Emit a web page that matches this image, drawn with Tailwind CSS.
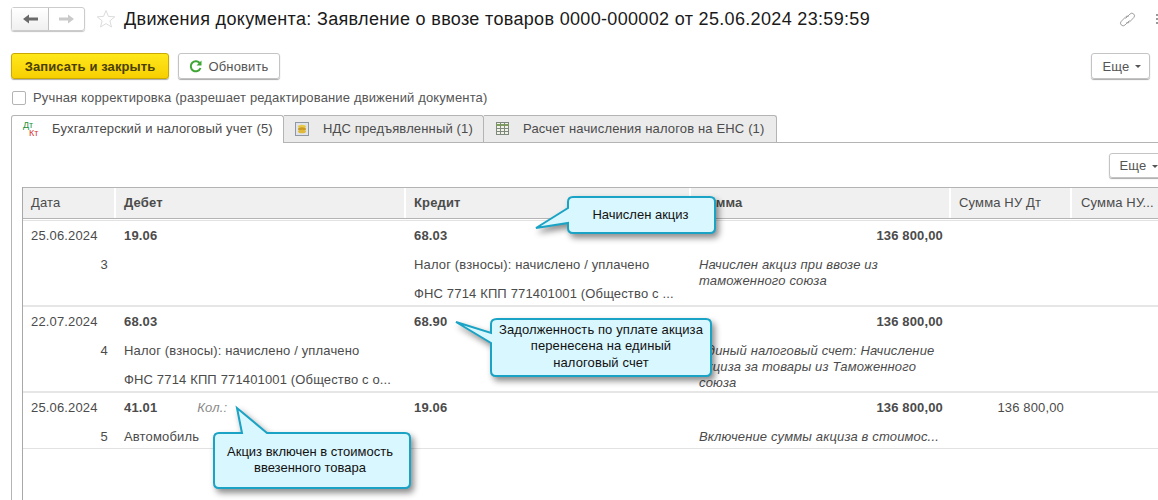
<!DOCTYPE html>
<html lang="ru">
<head>
    <meta charset="UTF-8">
    <title>Движения документа</title>
    <script src="https://cdn.jsdelivr.net/npm/@tailwindcss/browser@4"></script>
</head>
<body class="bg-white text-[#4b4b4b] font-['Liberation_Sans',Arial,sans-serif] text-[13px] tracking-[0.15px]">
<div class="relative w-[1158px] h-[500px] overflow-hidden">

    <!-- Title bar -->
    <header class="flex items-center h-[38px] pl-[11px]">
        <div class="flex h-[24px] w-[74px] rounded-[3px] border border-[#cccccc] shadow-[0_1px_1px_#c4c4c4]">
            <div class="w-[37px] flex items-center justify-center border-r border-[#c0c0c0] bg-gradient-to-b from-white to-[#f0f0f0]">
                <svg width="15" height="10" viewBox="0 0 15 10"><path d="M0 5 L6 0.5 V3.5 H15 V6.5 H6 V9.5 Z" fill="#6a6a6a"/></svg>
            </div>
            <div class="flex-1 flex items-center justify-center">
                <svg width="15" height="10" viewBox="0 0 15 10"><path d="M15 5 L9 0.5 V3.5 H0 V6.5 H9 V9.5 Z" fill="#cacaca"/></svg>
            </div>
        </div>
        <svg class="ml-[11px]" width="20" height="20" viewBox="0 0 20 20"><path d="M10 1.5 L12.4 7.4 L18.8 7.8 L13.9 11.8 L15.5 18 L10 14.6 L4.5 18 L6.1 11.8 L1.2 7.8 L7.6 7.4 Z" fill="none" stroke="#dcdcdc"/></svg>
        <h1 class="ml-[8px] text-[18px] tracking-[0.33px] text-[#1a1a1a] whitespace-nowrap">Движения документа: Заявление о ввозе товаров 0000-000002 от 25.06.2024 23:59:59</h1>
        <svg class="ml-auto mr-[20px]" width="17" height="17" viewBox="0 0 17 17" fill="none" stroke="#a0a0a0"><path d="M6.5 7.5 L11 3 a2.6 2.6 0 0 1 3.7 3.7 L10 11.5 a2.2 2.2 0 0 1 -2.5 0"/><path d="M10.5 9.5 L6 14 a2.6 2.6 0 0 1 -3.7 -3.7 L7 5.5 a2.2 2.2 0 0 1 2.5 0"/></svg>
        <div class="flex flex-col gap-[2px] w-[2px]">
            <span class="w-[2px] h-[2px] bg-[#999]"></span>
            <span class="w-[2px] h-[2px] bg-[#999]"></span>
            <span class="w-[2px] h-[2px] bg-[#999]"></span>
        </div>
    </header>

    <!-- Command bar -->
    <div class="flex items-center mt-[15px] h-[26px] pl-[11px] pr-[8px]">
        <button class="w-[158px] h-[26px] pt-[1px] rounded-[3px] border border-[#c9a800] bg-gradient-to-b from-[#ffe81a] to-[#f7cf00] font-bold tracking-[0.1px] text-[#4a4000] shadow-[0_1px_1px_#aaa]">Записать и закрыть</button>
        <button class="ml-[9px] w-[102px] h-[26px] pt-[1px] flex items-center justify-center gap-[6px] rounded-[3px] border border-[#c4c4c4] text-[#555] shadow-[0_1px_1px_#aaa]">
            <svg width="13" height="13" viewBox="0 0 13 13" fill="none"><path d="M11 3.6 A5 5 0 1 0 11.5 8" stroke="#3fa535" stroke-width="2"/><path d="M12.5 0.5 V5.5 H7.5 Z" fill="#3fa535"/></svg>
            Обновить
        </button>
        <button class="ml-auto w-[59px] h-[26px] pt-[1px] pl-[3px] flex items-center justify-center gap-[6px] rounded-[3px] border border-[#c4c4c4] text-[#555] shadow-[0_1px_1px_#aaa]">
            Еще <span class="w-0 h-0 border-x-[3px] border-x-transparent border-t-[3px] border-t-[#555]"></span>
        </button>
    </div>

    <!-- Manual adjustment -->
    <label class="flex items-center h-[16px] mt-[11px] pl-[12px]">
        <span class="w-[14px] h-[14px] rounded-[2px] border border-[#b4b4b4]"></span>
        <span class="ml-[7px] text-[#555] whitespace-nowrap">Ручная корректировка (разрешает редактирование движений документа)</span>
    </label>

    <!-- Tabs -->
    <div class="flex h-[28px] mt-[9px] ml-[11px] border-b border-[#b4b4b4]">
        <div class="flex items-center w-[273px] h-[28px] pb-[2px] pl-[10px] bg-white border border-b-0 border-[#b4b4b4] rounded-t-[3px] z-10">
            <span class="relative w-[30px] h-[20px] text-[9px] leading-[8px] tracking-normal">
                <span class="absolute left-[1px] top-[2px] text-[#1a8f3a]">Дт</span>
                <span class="absolute left-[7px] top-[10px] text-[#d4372c]">Кт</span>
            </span>
            <span class="whitespace-nowrap">Бухгалтерский и налоговый учет (5)</span>
        </div>
        <div class="flex items-center w-[200px] h-[27px] pb-[1px] pl-[11px] bg-[#ebebeb] border-r border-t border-[#b4b4b4] rounded-tr-[3px]">
            <svg width="14" height="14" viewBox="0 0 14 14"><rect x="0.5" y="0.5" width="13" height="13" fill="#dfe3ea" stroke="#8f97a3"/><ellipse cx="7" cy="4.5" rx="4" ry="1.8" fill="#e8c84a"/><ellipse cx="7" cy="7" rx="4" ry="1.8" fill="#c99a22"/><ellipse cx="7" cy="9.5" rx="4" ry="1.8" fill="#e0b83a"/></svg>
            <span class="ml-[14px] whitespace-nowrap">НДС предъявленный (1)</span>
        </div>
        <div class="flex items-center w-[293px] h-[27px] pb-[1px] pl-[12px] bg-[#ebebeb] border-r border-t border-[#b4b4b4] rounded-tr-[3px]">
            <svg width="13" height="13" viewBox="0 0 13 13" fill="none" stroke="#7f8a7f"><rect x="0.5" y="0.5" width="12" height="12" fill="#f2f2e8"/><path d="M0.5 3 H12.5" stroke="#7fa05a" stroke-width="2"/><path d="M0.5 6.5 H12.5 M0.5 9.5 H12.5 M4.5 0.5 V12.5 M8.5 0.5 V12.5"/></svg>
            <span class="ml-[14px] whitespace-nowrap">Расчет начисления налогов на ЕНС (1)</span>
        </div>
        <div class="flex-1"></div>
    </div>

    <!-- Tab body -->
    <div class="ml-[11px] border-l border-[#b4b4b4] h-[358px] pl-[10px]">
        <div class="flex justify-end h-[44px] pt-[10px] -mr-[11px]">
            <button class="w-[60px] h-[25px] pt-[1px] flex items-center justify-center gap-[6px] rounded-[3px] border border-[#c4c4c4] text-[#555] shadow-[0_1px_1px_#aaa]">
                Еще <span class="w-0 h-0 border-x-[3px] border-x-transparent border-t-[3px] border-t-[#555]"></span>
            </button>
        </div>

        <!-- Movements table -->
        <div class="w-[1200px] h-[314px] border-l border-[#a8a8a8]">
            <div class="grid grid-cols-[93px_290px_285px_260px_121px_150px] h-[32px] bg-[#f0f0f0] border-y border-[#b4b4b4] items-center">
                <div class="pl-[8px] pb-[1px] h-full flex items-center border-r-2 border-white">Дата</div>
                <div class="pl-[8px] pb-[1px] h-full flex items-center border-r-2 border-white font-bold">Дебет</div>
                <div class="pl-[8px] pb-[1px] h-full flex items-center border-r-2 border-white font-bold">Кредит</div>
                <div class="pl-[8px] pb-[1px] h-full flex items-center border-r-2 border-white font-bold">Сумма</div>
                <div class="pl-[8px] pb-[1px] h-full flex items-center border-r-2 border-white">Сумма НУ Дт</div>
                <div class="pl-[9px] pb-[1px] h-full flex items-center">Сумма НУ...</div>
            </div>
            <div class="h-[2px] border-b border-[#e2e2e2]"></div>

            <div class="grid grid-cols-[93px_290px_285px_260px_121px_150px] h-[86px] border-b-2 border-[#e6e6e6] leading-[29px]">
                <div class="pl-[8px]">25.06.2024<div class="pr-[8px] text-right">3</div></div>
                <div class="pl-[8px] font-bold">19.06</div>
                <div class="pl-[8px]">
                    <div class="font-bold">68.03</div>
                    <div>Налог (взносы): начислено / уплачено</div>
                    <div class="whitespace-nowrap">ФНС 7714 КПП 771401001 (Общество с ...</div>
                </div>
                <div class="pl-[8px] pr-[8px]">
                    <div class="font-bold text-right">136 800,00</div>
                    <div class="pt-[7px] italic leading-[16px]">Начислен акциз при ввозе из<br>таможенного союза</div>
                </div>
                <div></div>
                <div></div>
            </div>

            <div class="grid grid-cols-[93px_290px_285px_260px_121px_150px] h-[86px] border-b-2 border-[#e6e6e6] leading-[29px]">
                <div class="pl-[8px]">22.07.2024<div class="pr-[8px] text-right">4</div></div>
                <div class="pl-[8px]">
                    <div class="font-bold">68.03</div>
                    <div>Налог (взносы): начислено / уплачено</div>
                    <div class="whitespace-nowrap">ФНС 7714 КПП 771401001 (Общество с о...</div>
                </div>
                <div class="pl-[8px] font-bold">68.90</div>
                <div class="pl-[8px] pr-[8px]">
                    <div class="font-bold text-right">136 800,00</div>
                    <div class="pt-[7px] italic leading-[16px]">Единый налоговый счет: Начисление<br>акциза за товары из Таможенного<br>союза</div>
                </div>
                <div></div>
                <div></div>
            </div>

            <div class="grid grid-cols-[93px_290px_285px_260px_121px_150px] h-[56px] border-b border-[#e2e2e2] leading-[29px]">
                <div class="pl-[8px]">25.06.2024<div class="pr-[8px] text-right">5</div></div>
                <div class="pl-[8px]">
                    <div class="flex"><span class="font-bold">41.01</span><span class="ml-[40px] italic text-[#8a8a8a]">Кол.:</span></div>
                    <div>Автомобиль</div>
                </div>
                <div class="pl-[8px] font-bold">19.06</div>
                <div class="pl-[8px] pr-[8px]">
                    <div class="font-bold text-right">136 800,00</div>
                    <div class="italic whitespace-nowrap">Включение суммы акциза в стоимос...</div>
                </div>
                <div class="pr-[8px] text-right">136 800,00</div>
                <div></div>
            </div>
        </div>
    </div>

    <!-- Callouts drawn over the table -->
    <div class="absolute left-[530px] top-[192px] w-[190px] h-[50px]">
        <svg class="absolute inset-0 drop-shadow-[3px_4px_3px_rgba(0,0,0,0.45)]" width="190" height="50" viewBox="0 0 190 50"><path d="M43 5 H180 Q185 5 185 10 V36 Q185 41 180 41 H43 Q38 41 38 36 V31 L6 36 L38 16 V10 Q38 5 43 5 Z" fill="#d9f7fe" stroke="#1aa3c4" stroke-width="2"/></svg>
        <div class="absolute left-[38px] top-[5px] w-[147px] h-[36px] pr-[2px] pb-[1px] flex items-center justify-center text-[#111] tracking-normal">Начислен акциз</div>
    </div>
    <div class="absolute left-[450px] top-[313px] w-[270px] h-[70px]">
        <svg class="absolute inset-0 drop-shadow-[3px_4px_3px_rgba(0,0,0,0.45)]" width="270" height="70" viewBox="0 0 270 70"><path d="M47 6 H256 Q261 6 261 11 V58 Q261 63 256 63 H46 Q41 63 41 58 V30 L6 9 L41 20 V11 Q41 6 47 6 Z" fill="#d9f7fe" stroke="#1aa3c4" stroke-width="2"/></svg>
        <div class="absolute left-[41px] top-[6px] w-[220px] h-[57px] pb-[2px] flex items-center justify-center text-center leading-[16.5px] text-[#111] tracking-[0.1px]">Задолженность по уплате акциза<br>перенесена на единый<br>налоговый счет</div>
    </div>
    <div class="absolute left-[208px] top-[402px] w-[210px] h-[92px]">
        <svg class="absolute inset-0 drop-shadow-[3px_4px_3px_rgba(0,0,0,0.45)]" width="210" height="92" viewBox="0 0 210 92"><path d="M11 31 H34 L29 6 L59 31 H197 Q202 31 202 36 V81 Q202 86 197 86 H11 Q6 86 6 81 V36 Q6 31 11 31 Z" fill="#d9f7fe" stroke="#1aa3c4" stroke-width="2"/></svg>
        <div class="absolute left-[6px] top-[31px] w-[196px] h-[55px] pr-[4px] pb-[2px] flex items-center justify-center text-center leading-[16px] text-[#111] tracking-normal">Акциз включен в стоимость<br>ввезенного товара</div>
    </div>
</div>
</body>
</html>
